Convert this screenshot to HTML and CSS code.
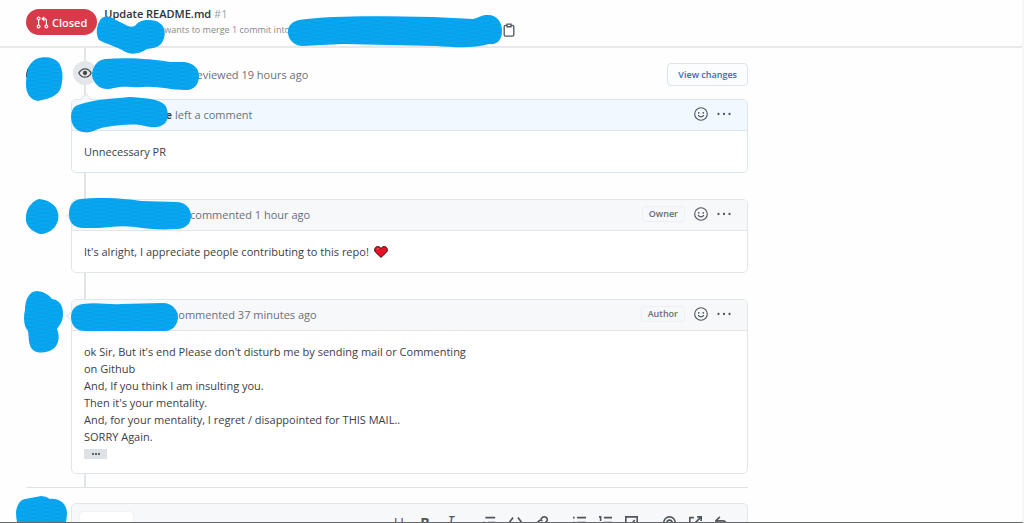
FILE: index.html
```
<!DOCTYPE html>
<html lang="en">
<head>
    <meta charset="utf-8">
    <title>Update README.md #1</title>
    <link rel="stylesheet" href="styles.css">
</head>
<body>
    <!-- shared icons and the marker texture -->
    <svg class="defs" width="0" height="0" aria-hidden="true">
        <defs>
            <pattern id="marker" width="24" height="4" patternUnits="userSpaceOnUse">
                <rect width="24" height="4" fill="#06a9f4"/>
                <path d="M0 1Q6 0 12 1T24 1M0 3Q6 4 12 3T24 3" fill="none" stroke="#0c96dc" stroke-width=".5"/>
            </pattern>
            <symbol id="smiley" viewBox="0 0 16 16">
                <circle cx="8" cy="8" r="7.2" fill="none" stroke="currentColor" stroke-width="1.3"/>
                <circle cx="5.4" cy="6.6" r="1"/>
                <circle cx="10.6" cy="6.6" r="1"/>
                <path d="M5 9.600c1.400 2.200 4.600 2.200 6 0" fill="none" stroke="currentColor" stroke-width="1.300" stroke-linecap="round"/>
            </symbol>
            <symbol id="kebab" viewBox="0 0 16 16">
                <circle cx="1.700" cy="8" r="1.300"/>
                <circle cx="8" cy="8" r="1.300"/>
                <circle cx="14.300" cy="8" r="1.300"/>
            </symbol>
        </defs>
    </svg>

    <header class="topbar">
        <span class="state">
            <svg class="line-icon" width="13" height="13" viewBox="0 0 16 16">
                <circle cx="3.200" cy="3" r="1.700"/><circle cx="3.200" cy="13" r="1.700"/><circle cx="12.800" cy="13" r="1.700"/>
                <path d="M3.200 4.700v6.600M12.800 11.300V5.500a2 2 0 0 0-2-2H8M10.200 1 7.700 3.500l2.500 2.500"/>
            </svg>
            Closed
        </span>
        <div class="heading">
            <h1>Update README.md <span class="number">#1</span></h1>
            <p class="merge">
                <span class="name name-head">
                    <svg class="scribble scribble-head" width="70" height="38" viewBox="0 0 70 38"><path fill="url(#marker)" d="M3 6C6 0 11-1 18 3l14 7q5 2 8-1c3-5 12-6 20-4 8 3 10 10 8 17-2 8-8 10-17 11-8 5-16 7-25 1C16 29 8 27 3 24 0 19 0 12 3 6z"/></svg>
                </span>wants to merge 1 commit into
                <span class="name name-branch">
                    <svg class="scribble scribble-branch" width="214" height="33" viewBox="0 0 214 33"><path fill="url(#marker)" d="M11 5C45 0 95 1 145 2l40 2c8-2 8-4 15-4 9 0 14 7 14 16s-5 14-13 13c-16 5-37 3-53 2L55 29 14 31C5 30 0 24 0 17S4 7 11 5z"/></svg>
                </span>
                <button class="icon-button" aria-label="Copy branch name">
                    <svg class="line-icon" width="14" height="14" viewBox="0 0 16 16"><path d="M5.500 2.700H4a1.500 1.500 0 0 0-1.500 1.500v9.300A1.500 1.500 0 0 0 4 15h8a1.500 1.500 0 0 0 1.500-1.500V4.200A1.500 1.500 0 0 0 12 2.700h-1.500M5.700 1.200h4.600v3.100H5.700z"/></svg>
                </button>
            </p>
        </div>
    </header>

    <main class="discussion">
        <div class="timeline">
            <section class="item review">
                <div class="avatar">
                    <svg class="scribble scribble-avatar" width="37" height="45" viewBox="0 0 37 45"><path fill="#24292e" d="M4 9Q0 12 0 20l5 1z"/><path fill="url(#marker)" d="M10 2C18-1 28 0 33 6c5 8 4 19 1 27-5 8-14 9-22 11C4 43 0 36 0 28c0-7 1-11 2-17Q5 5 10 2z"/></svg>
                </div>
                <div class="content">
                    <div class="review-row">
                        <span class="badge">
                            <svg class="line-icon" width="14" height="14" viewBox="0 0 16 16"><path d="M.9 8C2.500 5.200 5 3.200 8 3.200S13.500 5.200 15.100 8C13.500 10.800 11 12.800 8 12.800S2.500 10.800.9 8z"/><circle cx="8" cy="8" r="1.700" fill="currentColor"/></svg>
                        </span>
                        <span class="name name-reviewer">
                            <svg class="scribble scribble-reviewer" width="107" height="33" viewBox="0 0 107 33"><path fill="url(#marker)" d="M13 1C36-1 62 1 78 4l14 0c9 1 15 6 15 14 0 9-6 15-14 14-15 0-27-4-42-3-12 1-17-2-29 1C9 34 2 26 0 18 0 9 5 2 13 1z"/></svg>
                        </span>
                        <span class="meta">reviewed 19 hours ago</span>
                        <button class="view-changes">View changes</button>
                    </div>
                    <article class="comment comment-blue">
                        <div class="comment-header">
                            <span class="name name-left">
                                <svg class="scribble scribble-left" width="97" height="36" viewBox="0 0 97 36"><path fill="url(#marker)" d="M7 8C25 2 40 2 58 0c14 1 29 1 36 8 4 6 4 16-1 19-6 5-15 3-24 1-10-1-22 0-34 2-9 1-15 7-23 5C2 34-2 22 1 14Q3 9 7 8z"/></svg>
                                <b>e</b>
                            </span>
                            <span class="meta">left a comment</span>
                            <button class="icon-button push" aria-label="Add reaction"><svg width="14" height="14"><use href="#smiley"/></svg></button>
                            <button class="icon-button" aria-label="More options"><svg width="14" height="14"><use href="#kebab"/></svg></button>
                        </div>
                        <div class="comment-body">
                            <p>Unnecessary PR</p>
                        </div>
                    </article>
                </div>
            </section>

            <section class="item">
                <div class="avatar">
                    <svg class="scribble scribble-avatar" width="33" height="35" viewBox="0 0 33 35"><path fill="url(#marker)" d="M13 0C22 1 29 5 31 11c3 7 1 13-3 18-4 4-9 6-14 6C8 33 2 30 0 22-1 12 4 3 13 0z"/></svg>
                </div>
                <article class="comment">
                    <div class="comment-header">
                        <span class="name name-owner">
                            <svg class="scribble scribble-owner" width="122" height="32" viewBox="0 0 122 32"><path fill="url(#marker)" d="M12 1C32-1 52 0 72 3l35 1c9 0 15 6 15 14s-6 13-14 13c-17 1-29 0-42-2-14-2-25 0-36 1H13C4 29 0 24 0 16 0 7 4 2 12 1z"/></svg>
                        </span>
                        <span class="meta">commented 1 hour ago</span>
                        <span class="role push">Owner</span>
                        <button class="icon-button" aria-label="Add reaction"><svg width="14" height="14"><use href="#smiley"/></svg></button>
                        <button class="icon-button" aria-label="More options"><svg width="14" height="14"><use href="#kebab"/></svg></button>
                    </div>
                    <div class="comment-body">
                        <p>It's alright, I appreciate people contributing to this repo!
                            <svg class="heart" width="14" height="12" viewBox="0 0 14 12" role="img" aria-label="heart"><path fill="#e81224" stroke="#2b1113" d="M7 11.400 1.300 6C-.2 3.500 1 .8 3.600.6 5.200.5 6.400 1.400 7 2.500 7.600 1.400 8.800.5 10.400.6c2.600.2 3.800 2.900 2.300 5.400z"/><path d="M3 3.500q.5-1 1.500-1" stroke="#ff8090" fill="none"/></svg>
                        </p>
                    </div>
                </article>
            </section>

            <section class="item">
                <div class="avatar">
                    <svg class="scribble scribble-tall" width="39" height="62" viewBox="0 0 39 62"><path fill="url(#marker)" d="M13 0c8 1 12 4 15 8 8 1 11 7 11 15 0 8-4 12-6 15 3 7 2 16-4 20-5 4-15 5-20 1-5-4-4-13-5-19C0 36-1 27 1 19 1 9 5 0 13 0z"/></svg>
                </div>
                <article class="comment">
                    <div class="comment-header">
                        <span class="name name-author">
                            <svg class="scribble scribble-author" width="107" height="29" viewBox="0 0 107 29"><path fill="url(#marker)" d="M12 1C27-1 38 2 50 1l42-1c9 0 15 7 15 14s-5 14-13 14H14C5 28 0 22 0 14 0 7 4 2 12 1z"/></svg>
                        </span>
                        <span class="meta">commented 37 minutes ago</span>
                        <span class="role push">Author</span>
                        <button class="icon-button" aria-label="Add reaction"><svg width="14" height="14"><use href="#smiley"/></svg></button>
                        <button class="icon-button" aria-label="More options"><svg width="14" height="14"><use href="#kebab"/></svg></button>
                    </div>
                    <div class="comment-body">
                        <p>
                            ok Sir, But it's end Please don't disturb me by sending mail or Commenting<br>
                            on Github<br>
                            And, If you think I am insulting you.<br>
                            Then it's your mentality.<br>
                            And, for your mentality, I regret / disappointed for THIS MAIL..<br>
                            SORRY Again.
                        </p>
                        <button class="expander" aria-label="Show quoted text"><svg width="8" height="2" viewBox="0 0 8 2"><path d="M0 0h2v2H0zM3 0h2v2H3zM6 0h2v2H6z"/></svg></button>
                    </div>
                </article>
            </section>
        </div>

        <div class="item reply">
            <div class="avatar">
                <svg class="scribble scribble-reply" width="51" height="44" viewBox="0 0 51 44"><path fill="url(#marker)" d="M9 3C15 2 20 1 25 0q5 0 9 3c9-1 16 4 17 13 0 9-2 16-8 24H9C2 34 0 25 0 16 1 9 4 4 9 3z"/></svg>
            </div>
            <div class="editor">
                <button class="tab" aria-label="Write"></button>
                <div class="toolbar">
                    <div class="group">
                        <button aria-label="Heading">H</button>
                        <button aria-label="Bold"><b>B</b></button>
                        <button class="italic" aria-label="Italic">I</button>
                    </div>
                    <div class="group">
                        <button aria-label="Quote"><svg viewBox="0 0 16 16"><path d="M3 2h12M6 8h9M6 13h9M1.500 7v7"/></svg></button>
                        <button aria-label="Code"><svg viewBox="0 0 16 16"><path d="M5 2 1 7l4 5M11 2l4 5-4 5"/></svg></button>
                        <button aria-label="Link"><svg viewBox="0 0 16 16"><path d="m7 4 2-2a3.300 3.300 0 0 1 5 5l-3 3a3 3 0 0 1-4 0M9 12l-2 2a3.300 3.300 0 0 1-5-5l3-3a3 3 0 0 1 4 0"/></svg></button>
                    </div>
                    <div class="group">
                        <button aria-label="Bulleted list"><svg viewBox="0 0 16 16"><path d="M5 2h11M5 8h11M5 13h11M0 2h2M0 8h2M0 13h2"/></svg></button>
                        <button aria-label="Numbered list"><svg viewBox="0 0 16 16"><path d="M6 2h10M6 8h10M6 13h10M0 1h2v5M0 10h2v2l-2 2h2"/></svg></button>
                        <button aria-label="Task list"><svg viewBox="0 0 16 16"><path d="M1 1h14v14H1zM5 8l2 3 5-6"/></svg></button>
                    </div>
                    <div class="group">
                        <button aria-label="Mention"><svg viewBox="0 0 16 16"><circle cx="8" cy="8" r="7"/><circle cx="8" cy="8" r="3"/><path d="M11 8v2q2 2 4-1"/></svg></button>
                        <button aria-label="Reference"><svg viewBox="0 0 16 16"><path d="M6 2H1v12h12V9M7 9l7-7M10 1h5v5"/></svg></button>
                        <button aria-label="Saved replies"><svg viewBox="0 0 16 16"><path d="M6 1 1 6l5 5M1 6h9q4 0 5 7"/></svg></button>
                    </div>
                </div>
            </div>
        </div>
    </main>
</body>
</html>
```
FILE: styles.css
```
* {
    box-sizing: border-box;
}

body {
    display: flex;
    flex-direction: column;
    height: 100vh;
    margin: 0;
    overflow: hidden;
    font-family: "Open Sans", "Noto Sans", sans-serif;
    font-size: 11px;
    line-height: 17px;
    color: #3c4045;
    background: #fefefe;
    border-right: 2px solid #f6f7f7;
    border-bottom: 1px solid #66686b;
}

h1,
p {
    margin: 0;
}

button {
    font-family: inherit;
    cursor: pointer;
}

svg {
    display: block;
    fill: currentColor;
}

.line-icon {
    fill: none;
    stroke: currentColor;
    stroke-width: 1.5;
}

.defs,
.scribble {
    position: absolute;
}

/* header */

.topbar {
    display: flex;
    flex: none;
    gap: 7px;
    height: 48px;
    padding: 6px 26px;
    border-bottom: 2px solid #e6e8ea;
}

.state {
    display: flex;
    align-items: center;
    gap: 3px;
    height: 26px;
    margin-top: 3px;
    padding: 0 10px;
    font-weight: 600;
    color: #fff;
    background: #d73a49;
    border-radius: 13px;
}

h1 {
    font-size: 11px;
    font-weight: 600;
    line-height: 16px;
    color: #2f3337;
}

.number {
    font-weight: 400;
    color: #a0a4a8;
}

.merge {
    display: flex;
    align-items: center;
    font-size: 9px;
    line-height: 16px;
    color: #85898e;
}

.name {
    position: relative;
    flex: none;
    align-self: stretch;
}

.name-head { width: 60px; }
.name-branch { width: 212px; }
.name-reviewer { width: 93px; }
.name-left { width: 88px; text-align: right; }
.name-owner { width: 103px; }
.name-author { width: 86px; }

.scribble {
    z-index: 1;
}

.scribble-head { left: -8px; top: -6px; }
.scribble-branch { left: -2px; top: -7px; }
.scribble-reviewer { left: -7px; top: -4px; }
.scribble-left { left: -13px; top: -9px; }
.scribble-owner { left: -15px; top: -8px; }
.scribble-author { left: -13px; top: -3px; }
.scribble-avatar { left: 0; top: 0; }
.scribble-tall { left: -2px; top: -8px; }
.scribble-reply { left: -10px; top: -8px; }

.icon-button {
    display: flex;
    padding: 0;
    color: #50565d;
    background: none;
    border: 0;
}

/* timeline */

.discussion {
    flex: 1;
    min-height: 0;
    max-width: 748px;
    padding-left: 26px;
}

.timeline {
    position: relative;
    padding-bottom: 13px;
    border-bottom: 1px solid #dfe2e5;
}

.timeline::before {
    content: "";
    position: absolute;
    top: 0;
    bottom: 0;
    left: 58px;
    width: 2px;
    background: #e1e4e8;
}

.item {
    position: relative;
    display: grid;
    grid-template-columns: 45px minmax(0, 1fr);
    margin-bottom: 26px;
}

.item:last-child {
    margin-bottom: 0;
}

.avatar {
    position: relative;
}

.review {
    padding-top: 9px;
}

.review-row {
    display: flex;
    align-items: center;
    height: 24px;
    margin: 5px 0 13px;
}

.badge {
    display: flex;
    align-items: center;
    justify-content: center;
    width: 24px;
    height: 24px;
    margin: -3px 2px 0;
    color: #444a50;
    background: #e4e7ea;
    border-radius: 50%;
}

.meta {
    color: #6a7077;
}

.view-changes {
    height: 23px;
    margin-left: auto;
    padding: 0 10px;
    font-size: 9px;
    font-weight: 600;
    color: #3c66b4;
    background: #fbfdfe;
    border: 1px solid #dfe3e7;
    border-radius: 4px;
}

.comment {
    position: relative;
    background: #fff;
    border: 1px solid #e3e6e9;
    border-radius: 5px;
}

.comment::before {
    content: "";
    position: absolute;
    top: 12px;
    left: -4px;
    width: 7px;
    height: 7px;
    background: #f6f8fa;
    border: solid #e3e6e9;
    border-width: 0 0 1px 1px;
    transform: rotate(45deg);
}

.comment-blue::before {
    top: -5px;
    left: 10px;
    background: #f1f8ff;
    transform: rotate(135deg);
}

.comment-header {
    display: flex;
    align-items: center;
    gap: 3px;
    height: 31px;
    padding: 6px 16px 8px 12px;
    background: #f6f8fa;
    border-bottom: 1px solid #e3e6e9;
    border-radius: 4px 4px 0 0;
}

.comment-blue,
.comment-blue .comment-header {
    border-color: #dbe5ee;
}

.comment-blue .comment-header {
    background: #f1f8ff;
}

.comment-header .icon-button {
    margin-left: 6px;
}

.comment-header .push {
    margin-left: auto;
}

.role {
    padding: 0 6px;
    font-size: 9px;
    font-weight: 600;
    line-height: 14px;
    color: #686e75;
    border: 1px solid #edeff1;
    border-radius: 3px;
}

.comment-body {
    padding: 12px;
}

.heart {
    display: inline-block;
    margin-left: 2px;
    vertical-align: -2px;
}

.expander {
    display: flex;
    align-items: center;
    justify-content: center;
    width: 23px;
    height: 10px;
    margin: 4px 0 2px;
    padding: 0;
    color: #5c6268;
    background: #dfe2e5;
    border: 0;
}

/* reply box */

.reply {
    padding-top: 15px;
}

.reply .avatar {
    margin-top: 1px;
}

.editor {
    display: flex;
    align-items: flex-start;
    justify-content: space-between;
    height: 120px;
    padding: 7px 13px 0 7px;
    background: #f6f8fa;
    border: 1px solid #e3e6e9;
    border-radius: 5px;
}

.tab {
    width: 55px;
    height: 30px;
    background: #fff;
    border: 1px solid #f0f2f4;
    border-radius: 4px 4px 0 0;
}

.toolbar {
    display: flex;
    gap: 12px;
    padding-top: 3px;
}

.group {
    display: flex;
}

.group button {
    display: flex;
    align-items: center;
    justify-content: center;
    width: 26px;
    height: 17px;
    padding: 0;
    font-size: 14px;
    line-height: 17px;
    color: #50565d;
    background: none;
    border: 0;
}

.group .italic {
    font-family: "Liberation Mono", monospace;
    font-style: italic;
}

.group svg {
    width: 13px;
    height: 13px;
    fill: none;
    stroke: currentColor;
    stroke-width: 2;
}
```
